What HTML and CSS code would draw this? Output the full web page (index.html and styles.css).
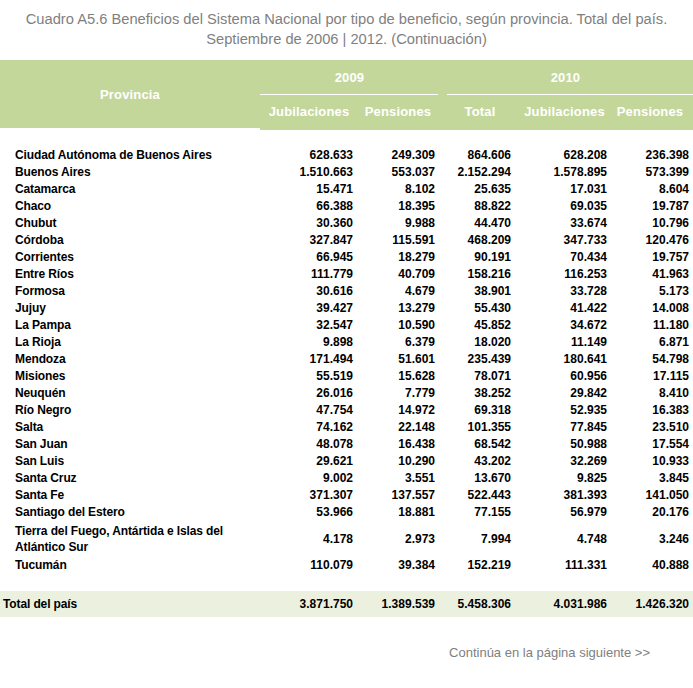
FILE: index.html
```html
<!DOCTYPE html>
<html lang="es">
<head>
<meta charset="utf-8">
<title>Cuadro A5.6</title>
<link rel="stylesheet" href="styles.css">
</head>
<body>
<div class="page">
  <h1 class="title">Cuadro A5.6 Beneficios del Sistema Nacional por tipo de beneficio, según provincia. Total del país.<br>Septiembre de 2006 | 2012. (Continuación)</h1>

  <div class="thead">
    <div class="th prov">Provincia</div>
    <div class="th year y2009"><span>2009</span></div>
    <div class="th year y2010"><span>2010</span></div>
    <div class="th sub">Jubilaciones</div>
    <div class="th sub">Pensiones</div>
    <div class="th sub">Total</div>
    <div class="th sub">Jubilaciones</div>
    <div class="th sub">Pensiones</div>
  </div>

  <div class="tbody">
    <div class="row"><div class="lbl">Ciudad Autónoma de Buenos Aires</div><div class="n c1">628.633</div><div class="n c2">249.309</div><div class="n c3">864.606</div><div class="n c4">628.208</div><div class="n c5">236.398</div></div>
    <div class="row"><div class="lbl">Buenos Aires</div><div class="n c1">1.510.663</div><div class="n c2">553.037</div><div class="n c3">2.152.294</div><div class="n c4">1.578.895</div><div class="n c5">573.399</div></div>
    <div class="row"><div class="lbl">Catamarca</div><div class="n c1">15.471</div><div class="n c2">8.102</div><div class="n c3">25.635</div><div class="n c4">17.031</div><div class="n c5">8.604</div></div>
    <div class="row"><div class="lbl">Chaco</div><div class="n c1">66.388</div><div class="n c2">18.395</div><div class="n c3">88.822</div><div class="n c4">69.035</div><div class="n c5">19.787</div></div>
    <div class="row"><div class="lbl">Chubut</div><div class="n c1">30.360</div><div class="n c2">9.988</div><div class="n c3">44.470</div><div class="n c4">33.674</div><div class="n c5">10.796</div></div>
    <div class="row"><div class="lbl">Córdoba</div><div class="n c1">327.847</div><div class="n c2">115.591</div><div class="n c3">468.209</div><div class="n c4">347.733</div><div class="n c5">120.476</div></div>
    <div class="row"><div class="lbl">Corrientes</div><div class="n c1">66.945</div><div class="n c2">18.279</div><div class="n c3">90.191</div><div class="n c4">70.434</div><div class="n c5">19.757</div></div>
    <div class="row"><div class="lbl">Entre Ríos</div><div class="n c1">111.779</div><div class="n c2">40.709</div><div class="n c3">158.216</div><div class="n c4">116.253</div><div class="n c5">41.963</div></div>
    <div class="row"><div class="lbl">Formosa</div><div class="n c1">30.616</div><div class="n c2">4.679</div><div class="n c3">38.901</div><div class="n c4">33.728</div><div class="n c5">5.173</div></div>
    <div class="row"><div class="lbl">Jujuy</div><div class="n c1">39.427</div><div class="n c2">13.279</div><div class="n c3">55.430</div><div class="n c4">41.422</div><div class="n c5">14.008</div></div>
    <div class="row"><div class="lbl">La Pampa</div><div class="n c1">32.547</div><div class="n c2">10.590</div><div class="n c3">45.852</div><div class="n c4">34.672</div><div class="n c5">11.180</div></div>
    <div class="row"><div class="lbl">La Rioja</div><div class="n c1">9.898</div><div class="n c2">6.379</div><div class="n c3">18.020</div><div class="n c4">11.149</div><div class="n c5">6.871</div></div>
    <div class="row"><div class="lbl">Mendoza</div><div class="n c1">171.494</div><div class="n c2">51.601</div><div class="n c3">235.439</div><div class="n c4">180.641</div><div class="n c5">54.798</div></div>
    <div class="row"><div class="lbl">Misiones</div><div class="n c1">55.519</div><div class="n c2">15.628</div><div class="n c3">78.071</div><div class="n c4">60.956</div><div class="n c5">17.115</div></div>
    <div class="row"><div class="lbl">Neuquén</div><div class="n c1">26.016</div><div class="n c2">7.779</div><div class="n c3">38.252</div><div class="n c4">29.842</div><div class="n c5">8.410</div></div>
    <div class="row"><div class="lbl">Río Negro</div><div class="n c1">47.754</div><div class="n c2">14.972</div><div class="n c3">69.318</div><div class="n c4">52.935</div><div class="n c5">16.383</div></div>
    <div class="row"><div class="lbl">Salta</div><div class="n c1">74.162</div><div class="n c2">22.148</div><div class="n c3">101.355</div><div class="n c4">77.845</div><div class="n c5">23.510</div></div>
    <div class="row"><div class="lbl">San Juan</div><div class="n c1">48.078</div><div class="n c2">16.438</div><div class="n c3">68.542</div><div class="n c4">50.988</div><div class="n c5">17.554</div></div>
    <div class="row"><div class="lbl">San Luis</div><div class="n c1">29.621</div><div class="n c2">10.290</div><div class="n c3">43.202</div><div class="n c4">32.269</div><div class="n c5">10.933</div></div>
    <div class="row"><div class="lbl">Santa Cruz</div><div class="n c1">9.002</div><div class="n c2">3.551</div><div class="n c3">13.670</div><div class="n c4">9.825</div><div class="n c5">3.845</div></div>
    <div class="row"><div class="lbl">Santa Fe</div><div class="n c1">371.307</div><div class="n c2">137.557</div><div class="n c3">522.443</div><div class="n c4">381.393</div><div class="n c5">141.050</div></div>
    <div class="row"><div class="lbl">Santiago del Estero</div><div class="n c1">53.966</div><div class="n c2">18.881</div><div class="n c3">77.155</div><div class="n c4">56.979</div><div class="n c5">20.176</div></div>
    <div class="row tall"><div class="lbl">Tierra del Fuego, Antártida e Islas del<br>Atlántico Sur</div><div class="n c1">4.178</div><div class="n c2">2.973</div><div class="n c3">7.994</div><div class="n c4">4.748</div><div class="n c5">3.246</div></div>
    <div class="row"><div class="lbl">Tucumán</div><div class="n c1">110.079</div><div class="n c2">39.384</div><div class="n c3">152.219</div><div class="n c4">111.331</div><div class="n c5">40.888</div></div>
  </div>

  <div class="row total"><div class="lbl">Total del país</div><div class="n c1">3.871.750</div><div class="n c2">1.389.539</div><div class="n c3">5.458.306</div><div class="n c4">4.031.986</div><div class="n c5">1.426.320</div></div>

  <p class="cont">Continúa en la página siguiente &gt;&gt;</p>
</div>
</body>
</html>
```

FILE: styles.css
```css
html, body {
  margin: 0;
  padding: 0;
  background: #ffffff;
}

.page {
  width: 693px;
  font-family: "Liberation Sans", Arial, sans-serif;
  --cols: 260px 98px 80px 84px 85px 86px;
}

.title {
  margin: 0;
  padding: 9px 0 0;
  height: 60px;
  box-sizing: border-box;
  font-size: 14.7px;
  font-weight: normal;
  line-height: 20px;
  color: #7f7f7f;
  text-align: center;
}

.thead {
  display: grid;
  grid-template-columns: var(--cols);
  grid-template-rows: 35px 35px;
  height: 70px;
  color: #ffffff;
  font-size: 13px;
  font-weight: bold;
  letter-spacing: 0.15px;
}

.th {
  background: #c4d79b;
  display: flex;
  align-items: center;
  justify-content: center;
}

.prov {
  grid-row: 1 / 3;
  margin-bottom: 2px;
}

.y2009 {
  grid-column: 2 / 4;
}

.y2010 {
  grid-column: 4 / 7;
}

.year {
  align-items: stretch;
  padding: 0;
}

.year span {
  flex: 1;
  display: flex;
  align-items: center;
  justify-content: center;
  border-bottom: 1px solid #ffffff;
}

.y2009 span {
  margin-right: -1px;
}

.y2010 span {
  margin-left: 9px;
  padding-right: 9px;
}

.sub {
  padding-bottom: 2px;
}

.tbody {
  padding-top: 17px;
  padding-bottom: 17px;
}

.row {
  display: grid;
  grid-template-columns: var(--cols);
  height: 17px;
  align-items: center;
  font-size: 12px;
  font-weight: bold;
  line-height: 17px;
  color: #000000;
}

.lbl {
  padding-left: 15px;
  white-space: nowrap;
  letter-spacing: -0.12px;
}

.tall {
  height: 36px;
}

.tall .lbl {
  align-self: start;
  padding-top: 2px;
  line-height: 16px;
}

.n {
  text-align: right;
}

.c1 { padding-right: 5px; }
.c2 { padding-right: 3px; }
.c3 { padding-right: 11px; }
.c4 { padding-right: 0; }
.c5 { padding-right: 4px; }

.total {
  height: 26px;
  background: #ebf1de;
}

.total .lbl {
  padding-left: 3px;
}

.cont {
  margin: 0;
  padding: 28px 43px 0 0;
  font-size: 13px;
  line-height: 16px;
  color: #808080;
  text-align: right;
}
```
